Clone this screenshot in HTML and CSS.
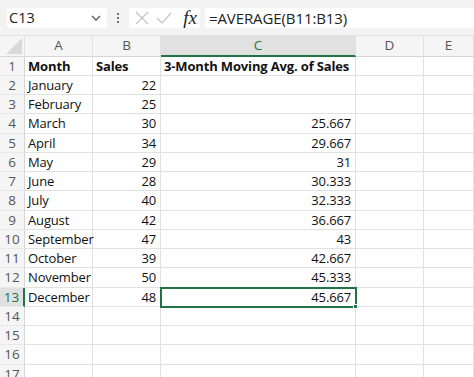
FILE: index.html
```html
<!DOCTYPE html>
<html>
<head>
<meta charset="utf-8">
<link rel="stylesheet" href="styles.css">
</head>
<body>
<div class="app">
  <div class="fbar">
    <div class="namebox">
      <span class="name">C13</span>
      <svg class="chev" width="10" height="6" viewBox="0 0 10 6"><path d="M1 1 L5 5 L9 1" fill="none" stroke="#555" stroke-width="1.3"/></svg>
    </div>
    <div class="dots"><i></i><i></i><i></i></div>
    <div class="btns">
      <svg width="16" height="16" viewBox="0 0 16 16"><path d="M2 2 L14 14 M14 2 L2 14" stroke="#c4c4c4" stroke-width="1.2" fill="none"/></svg>
      <svg width="18" height="16" viewBox="0 0 18 16"><path d="M2 8 L7 13 L16 3" stroke="#c4c4c4" stroke-width="1.2" fill="none"/></svg>
      <span class="fx">fx</span>
    </div>
    <div class="formula">=AVERAGE(B11:B13)</div>
  </div>
  <div class="sheet">
    <div class="corner"><svg width="17" height="16" viewBox="0 0 17 16"><path d="M16 0 L16 16 L0 16 Z" fill="#d9d9d9"/></svg></div>
    <div class="ch">A</div><div class="ch">B</div><div class="ch sel">C</div><div class="ch">D</div><div class="ch">E</div>

    <div class="rh">1</div><div class="c b">Month</div><div class="c b">Sales</div><div class="c b">3-Month Moving Avg. of Sales</div><div class="c"></div><div class="c"></div>
    <div class="rh">2</div><div class="c">January</div><div class="c n">22</div><div class="c n"></div><div class="c"></div><div class="c"></div>
    <div class="rh">3</div><div class="c">February</div><div class="c n">25</div><div class="c n"></div><div class="c"></div><div class="c"></div>
    <div class="rh">4</div><div class="c">March</div><div class="c n">30</div><div class="c n">25.667</div><div class="c"></div><div class="c"></div>
    <div class="rh">5</div><div class="c">April</div><div class="c n">34</div><div class="c n">29.667</div><div class="c"></div><div class="c"></div>
    <div class="rh">6</div><div class="c">May</div><div class="c n">29</div><div class="c n">31</div><div class="c"></div><div class="c"></div>
    <div class="rh">7</div><div class="c">June</div><div class="c n">28</div><div class="c n">30.333</div><div class="c"></div><div class="c"></div>
    <div class="rh">8</div><div class="c">July</div><div class="c n">40</div><div class="c n">32.333</div><div class="c"></div><div class="c"></div>
    <div class="rh">9</div><div class="c">August</div><div class="c n">42</div><div class="c n">36.667</div><div class="c"></div><div class="c"></div>
    <div class="rh">10</div><div class="c">September</div><div class="c n">47</div><div class="c n">43</div><div class="c"></div><div class="c"></div>
    <div class="rh">11</div><div class="c">October</div><div class="c n">39</div><div class="c n">42.667</div><div class="c"></div><div class="c"></div>
    <div class="rh">12</div><div class="c">November</div><div class="c n">50</div><div class="c n">45.333</div><div class="c"></div><div class="c"></div>
    <div class="rh sel">13</div><div class="c">December</div><div class="c n">48</div><div class="c n active">45.667<span class="handle"></span></div><div class="c"></div><div class="c"></div>
    <div class="rh">14</div><div class="c"></div><div class="c"></div><div class="c"></div><div class="c"></div><div class="c"></div>
    <div class="rh">15</div><div class="c"></div><div class="c"></div><div class="c"></div><div class="c"></div><div class="c"></div>
    <div class="rh">16</div><div class="c"></div><div class="c"></div><div class="c"></div><div class="c"></div><div class="c"></div>
    <div class="rh">17</div><div class="c"></div><div class="c"></div><div class="c"></div><div class="c"></div><div class="c"></div>
  </div>
</div>
</body>
</html>
```

FILE: styles.css
```css
* { box-sizing: border-box; }
html, body { margin: 0; padding: 0; background: #fff; }
body { width: 474px; height: 377px; overflow: hidden; font-family: "Open Sans", "Noto Sans", sans-serif; color: #111; }
.app { display: flex; flex-direction: column; }
.fbar {
  height: 36px; background: #f3f3f3; display: flex; align-items: center;
  padding: 0 0 0 7px; border-bottom: 1px solid #e2e2e2;
}
.namebox {
  width: 100px; height: 20px; background: #fff; border-radius: 3px;
  display: flex; align-items: center; justify-content: space-between; padding: 0 6px 0 2px;
}
.name { font-size: 14.5px; color: #222; }
.dots { width: 22px; display: flex; flex-direction: column; align-items: center; gap: 2px; }
.dots i { display: block; width: 2px; height: 2px; background: #444; border-radius: 1px; }
.btns {
  width: 71px; height: 20px; background: #fff; border-radius: 3px;
  display: flex; align-items: center; gap: 5px; padding: 0 3px 0 5px;
}
.fx { font-family: "Liberation Serif", "DejaVu Serif", serif; font-style: italic; font-size: 19px; color: #222; margin-left: auto; line-height: 20px; }
.formula {
  flex: 1; height: 20px; margin-left: 5px; background: #fff; border-radius: 3px 0 0 3px;
  font-size: 15px; line-height: 20px; padding-left: 4px; color: #222; letter-spacing: -0.1px;
}
.sheet {
  display: grid;
  grid-template-columns: 25px 68px 68px 195px 68px 1fr;
  grid-template-rows: 20.5px repeat(17, 19.25px);
}
.corner { background: #f5f5f5; display: flex; align-items: flex-end; justify-content: flex-end; padding: 0 1px 2px 0; border-right: 1px solid #e1e1e1; border-bottom: 1px solid #d6d6d6; }
.ch {
  background: #f5f5f5; border-right: 1px solid #e1e1e1; border-bottom: 1px solid #d6d6d6;
  font-size: 13.5px; color: #555; text-align: center; line-height: 19px;
}
.ch.sel { background: #e1e1e1; border-bottom: 2px solid #217346; color: #217346; }
.rh {
  background: #f5f5f5; border-right: 1px solid #d6d6d6; border-bottom: 1px solid #e8e8e8;
  font-size: 13.5px; color: #555; text-align: center; line-height: 18px;
}
.rh.sel { background: #e1e1e1; border-right: 2px solid #217346; color: #217346; }
.c {
  border-right: 1px solid #e1e1e1; border-bottom: 1px solid #e1e1e1;
  font-size: 13px; letter-spacing: -0.15px; line-height: 18px; padding: 0 3px; white-space: nowrap; color: #111;
}
.c.b { font-weight: 700; }
.c.n { text-align: right; padding-right: 4px; }
.c.active { position: relative; outline: 2px solid #217346; outline-offset: -1px; }
.handle { position: absolute; right: -3px; bottom: -3px; width: 5px; height: 5px; background: #217346; border: 1px solid #fff; }
```
